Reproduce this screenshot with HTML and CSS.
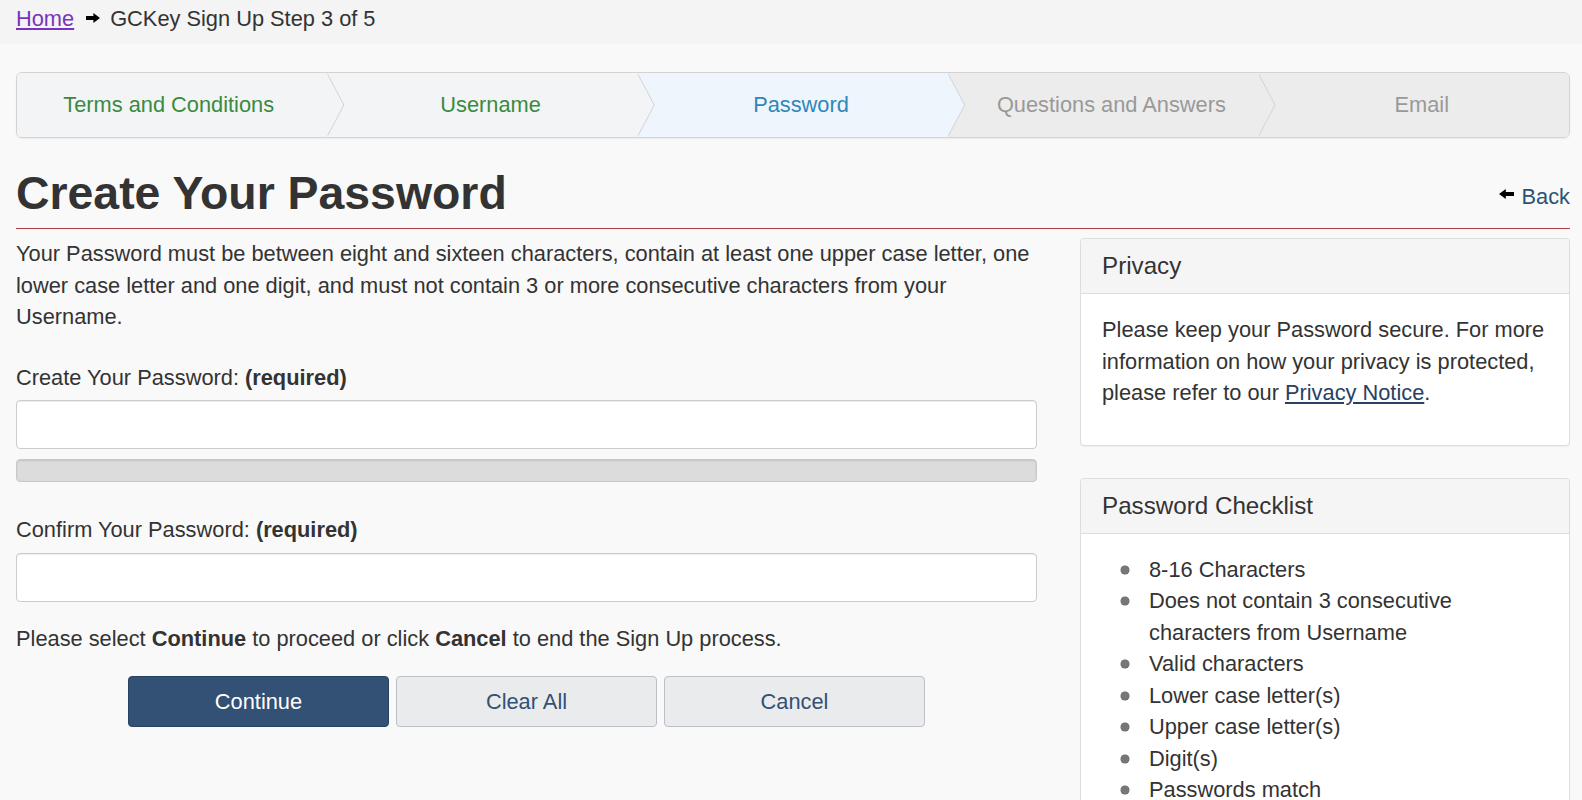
FILE: index.html
```html
<!DOCTYPE html>
<html lang="en">
<head>
    <meta charset="UTF-8">
    <meta name="viewport" content="width=device-width, initial-scale=1.0">
    <title>GCKey Sign Up - Create Your Password</title>
    <link rel="stylesheet" href="styles.css">
</head>
<body>
    <!-- Breadcrumb -->
    <div class="breadcrumb">
        <a href="#" class="home-link">Home</a>
        <svg class="crumb-arrow" width="14" height="10" viewBox="0 0 14 10" aria-hidden="true">
            <path d="M0 3h7.4V0L14 5l-6.6 5V7H0z" fill="#000"/>
        </svg>
        <span>GCKey Sign Up Step 3 of 5</span>
    </div>

    <main class="container">
        <!-- Progress steps -->
        <ol class="steps">
            <li class="step done">Terms and Conditions</li>
            <li class="step done">Username</li>
            <li class="step active">Password</li>
            <li class="step todo">Questions and Answers</li>
            <li class="step todo">Email</li>
        </ol>

        <div class="title-row">
            <h1>Create Your Password</h1>
            <a href="#" class="back-link">
                <svg width="15" height="10" viewBox="0 0 15 10" aria-hidden="true">
                    <path d="M15 3H6.8V0L0 5l6.8 5V7H15z" fill="#000"/>
                </svg>
                <span>Back</span>
            </a>
        </div>

        <div class="content">
            <!-- Form column -->
            <div class="form-col">
                <p class="intro">Your Password must be between eight and sixteen characters, contain at least one upper case letter, one lower case letter and one digit, and must not contain 3 or more consecutive characters from your Username.</p>

                <label class="field-label" for="password">Create Your Password: <strong>(required)</strong></label>
                <input type="password" id="password" class="field">
                <div class="meter"></div>

                <label class="field-label second" for="confirm">Confirm Your Password: <strong>(required)</strong></label>
                <input type="password" id="confirm" class="field">

                <p class="hint">Please select <strong>Continue</strong> to proceed or click <strong>Cancel</strong> to end the Sign Up process.</p>

                <div class="buttons">
                    <button type="button" class="btn btn-primary">Continue</button>
                    <button type="button" class="btn btn-default">Clear All</button>
                    <button type="button" class="btn btn-default">Cancel</button>
                </div>
            </div>

            <!-- Side panels -->
            <aside class="side-col">
                <section class="panel">
                    <h2 class="panel-heading">Privacy</h2>
                    <div class="panel-body privacy-body">
                        <p>Please keep your Password secure. For more information on how your privacy is protected, please refer to our <a href="#" class="notice-link">Privacy Notice</a>.</p>
                    </div>
                </section>

                <section class="panel checklist">
                    <h2 class="panel-heading">Password Checklist</h2>
                    <div class="panel-body checklist-body">
                        <ul>
                            <li>8-16 Characters</li>
                            <li>Does not contain 3 consecutive characters from Username</li>
                            <li>Valid characters</li>
                            <li>Lower case letter(s)</li>
                            <li>Upper case letter(s)</li>
                            <li>Digit(s)</li>
                            <li>Passwords match</li>
                        </ul>
                    </div>
                </section>
            </aside>
        </div>
    </main>
</body>
</html>
```

FILE: styles.css
```css
body {
    margin: 0;
    font-family: "Liberation Sans", Arial, Helvetica, sans-serif;
    font-size: 21.8px;
    line-height: 31.5px;
    color: #333;
    background-color: #f9f9f9;
}

/* Breadcrumb */
.breadcrumb {
    height: 44px;
    box-sizing: border-box;
    padding: 3px 16px 0;
    background-color: #f4f4f4;
    display: flex;
    align-items: flex-start;
}

.home-link {
    color: #7834bc;
    text-decoration: underline;
}

.crumb-arrow {
    margin: 10px 10px 0 12px;
    flex-shrink: 0;
}

.container {
    padding: 0 12px 0 16px;
}

/* Steps */
.steps {
    display: grid;
    grid-template-columns: repeat(5, 1fr);
    list-style: none;
    margin: 28px 0 0;
    padding: 0;
    height: 66px;
    box-sizing: border-box;
    border: 1px solid #d3d3d3;
    border-radius: 6px;
    overflow: hidden;
    box-shadow: 0 1px 2px rgba(0,0,0,0.06);
}

.step {
    position: relative;
    display: flex;
    align-items: center;
    justify-content: center;
    padding-left: 16px;
}

.step:first-child {
    padding-left: 0;
    padding-right: 7px;
}

.step.done {
    background-color: #f3f4f6;
    color: #3a8a3f;
}

.step.active {
    background-color: #eef5fd;
    color: #2f87b8;
}

.step.todo {
    background-color: #ececec;
    color: #999;
}

.step:not(:last-child)::before,
.step:not(:last-child)::after {
    content: "";
    position: absolute;
    top: 0;
    bottom: 0;
    width: 17px;
    clip-path: polygon(0 0, 100% 50%, 0 100%);
    z-index: 1;
}

.step:not(:last-child)::before {
    right: -17px;
    background-color: #d2d2d2;
}

.step:not(:last-child)::after {
    right: -16px;
    background-color: inherit;
}

/* Title */
.title-row {
    display: flex;
    justify-content: space-between;
    align-items: flex-end;
    margin-top: 30px;
    padding-bottom: 10px;
    border-bottom: 1px solid #af3c43;
}

.title-row h1 {
    margin: 0;
    font-size: 46.4px;
    line-height: 50px;
    font-weight: bold;
    color: #333;
}

.back-link {
    display: flex;
    align-items: center;
    gap: 8px;
    margin-bottom: 6px;
    color: #295376;
    text-decoration: none;
}

.back-link svg {
    margin-top: -4px;
}

/* Content */
.content {
    display: grid;
    grid-template-columns: 1021px 1fr;
    gap: 43px;
    margin-top: 9px;
    align-items: start;
}

.intro {
    margin: 0 0 29px;
}

.field-label {
    display: block;
    margin-bottom: 7px;
}

.field-label.second {
    margin-top: 32px;
}

.field {
    display: block;
    width: 100%;
    height: 49px;
    box-sizing: border-box;
    border: 1px solid #ccc;
    border-radius: 4px;
    background-color: #fff;
    box-shadow: inset 0 1px 1px rgba(0,0,0,0.075);
    font-size: 21.8px;
    padding: 6px 12px;
    outline: none;
}

.meter {
    height: 23px;
    margin-top: 10px;
    box-sizing: border-box;
    border: 1px solid #c8c8c8;
    border-radius: 4px;
    background-color: #dcdcdc;
    box-shadow: inset 0 1px 2px rgba(0,0,0,0.1);
}

.hint {
    margin: 21px 0 0;
}

.buttons {
    display: flex;
    justify-content: center;
    gap: 7px;
    margin-top: 22px;
}

.btn {
    width: 261px;
    height: 51px;
    border-radius: 4px;
    font-family: inherit;
    font-size: 21.8px;
    cursor: pointer;
}

.btn-primary {
    background-color: #335075;
    border: 1px solid #2a4262;
    color: #fff;
}

.btn-default {
    background-color: #eaebed;
    border: 1px solid #bcbfc5;
    color: #335075;
}

/* Panels */
.panel {
    background-color: #fff;
    border: 1px solid #ddd;
    border-radius: 4px;
    box-shadow: 0 1px 1px rgba(0,0,0,0.05);
    overflow: hidden;
}

.panel.checklist {
    margin-top: 32px;
}

.panel-heading {
    margin: 0;
    padding: 13px 21px;
    font-size: 24.2px;
    line-height: 28px;
    font-weight: normal;
    color: #333;
    background-color: #f5f5f5;
    border-bottom: 1px solid #ddd;
}

.panel-body {
    padding: 20px 21px 36px;
}

.panel-body p {
    margin: 0;
}

.notice-link {
    color: #284162;
    text-decoration: underline;
}

.checklist-body {
    padding-top: 20px;
}

.checklist-body ul {
    list-style: none;
    margin: 0;
    padding: 0 0 0 19px;
}

.checklist-body li {
    display: flex;
}

.checklist-body li::before {
    content: "";
    flex-shrink: 0;
    width: 8px;
    height: 8px;
    margin: 12px 20px 0 0;
    border-radius: 50%;
    background-color: #777;
    box-shadow: 0 0 0 0.5px #666;
}
```
